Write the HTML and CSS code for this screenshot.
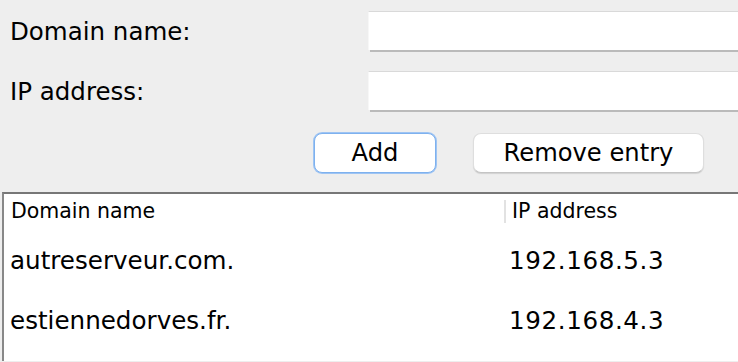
FILE: index.html
```html
<!DOCTYPE html>
<html>
<head>
<meta charset="utf-8">
<link rel="stylesheet" href="styles.css">
</head>
<body>
<div class="form">
  <div class="row">
    <label class="label">Domain name:</label>
    <div class="field"></div>
  </div>
  <div class="row">
    <label class="label">IP address:</label>
    <div class="field"></div>
  </div>
  <div class="buttons">
    <button class="btn btn-add">Add</button>
    <button class="btn btn-remove">Remove entry</button>
  </div>
</div>
<div class="table">
  <div class="thead">
    <div class="th th-first">Domain name</div>
    <div class="th th-second">IP address</div>
  </div>
  <div class="tr">
    <div class="td td-first">autreserveur.com.</div>
    <div class="td td-second">192.168.5.3</div>
  </div>
  <div class="tr">
    <div class="td td-first">estiennedorves.fr.</div>
    <div class="td td-second">192.168.4.3</div>
  </div>
</div>
</body>
</html>
```
FILE: styles.css
```css
html, body {
  margin: 0;
  padding: 0;
}
body {
  width: 738px;
  height: 362px;
  overflow: hidden;
  background: #eeeeee;
  font-family: "DejaVu Sans", sans-serif;
  color: #000;
}
.form {
  padding-top: 11px;
  display: flex;
  flex-direction: column;
  gap: 21px;
}
.row {
  display: grid;
  grid-template-columns: 368px 370px;
  align-items: center;
  height: 39px;
}
.label {
  padding-left: 10px;
  padding-top: 2px;
  font-size: 24.5px;
  line-height: 28px;
}
.field {
  height: 38px;
  background: #ffffff;
  border-top: 1px solid #d9d9d9;
  border-left: 1px solid #f7f7f7;
  box-shadow: 2px 2px 0 #bababa;
}
.buttons {
  display: flex;
  justify-content: flex-end;
  gap: 37px;
  padding-right: 34px;
  margin-top: 2px;
  height: 40px;
}
.btn {
  box-sizing: border-box;
  height: 40px;
  margin: 0;
  padding: 0;
  background: #ffffff;
  font-family: "DejaVu Sans", sans-serif;
  font-size: 24.2px;
  color: #000;
  border-radius: 8px;
}
.btn-add {
  width: 122px;
  border: 1px solid #7eb1ee;
  box-shadow: 0 0 0 1px #9ec4f3;
}
.btn-remove {
  width: 231px;
  border: 1px solid #dedede;
  border-bottom-color: #c4c4c4;
  box-shadow: 0 1px 1px rgba(0, 0, 0, 0.12);
}
.table {
  margin-top: 19px;
  margin-left: 2px;
  height: 167px;
  overflow: hidden;
  background: #ffffff;
  border-top: 2px solid #777777;
  border-left: 2px solid #888888;
}
.thead, .tr {
  display: grid;
  grid-template-columns: 500px 1fr;
}
.thead {
  height: 35px;
  align-items: center;
}
.th {
  font-size: 20.5px;
  line-height: 23px;
}
.th-first {
  padding-left: 7px;
}
.th-second {
  padding-left: 6px;
  border-left: 2px solid #e2e2e2;
  line-height: 21px;
  padding-top: 1px;
  padding-bottom: 1px;
}
.tr {
  height: 60px;
  align-items: center;
}
.td {
  font-size: 24.6px;
  line-height: 60px;
  padding-top: 2px;
}
.td-first {
  padding-left: 6px;
}
.td-second {
  padding-left: 5px;
  letter-spacing: 0.6px;
}
```
